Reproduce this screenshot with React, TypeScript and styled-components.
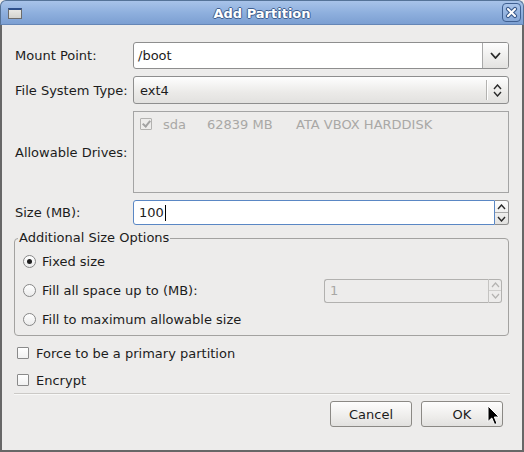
import styled, { createGlobalStyle } from "styled-components";

const GlobalStyle = createGlobalStyle`
  html, body {
    margin: 0;
    padding: 0;
    background: #edeceb;
  }
  body {
    font-family: "DejaVu Sans", "Liberation Sans", sans-serif;
    font-size: 13px;
    color: #1c1c1c;
  }
`;

const Chevron = ({ up, w = 9, h = 5, sw = 1.8, color = "#2a2a2a" }: { up?: boolean; w?: number; h?: number; sw?: number; color?: string }) => (
  <svg width={w + 2} height={h + 2} viewBox={`0 0 ${w + 2} ${h + 2}`}>
    <path
      d={up ? `M1 ${h + 1} L${w / 2 + 1} 1 L${w + 1} ${h + 1}` : `M1 1 L${w / 2 + 1} ${h + 1} L${w + 1} 1`}
      fill="none"
      stroke={color}
      strokeWidth={sw}
    />
  </svg>
);

const App = () => {
  return (
    <>
      <GlobalStyle />
      <Window>
        <TitleBar>
          <WindowIcon />
          <Title>Add Partition</Title>
          <CloseButton>
            <svg width="19" height="19" viewBox="0 0 19 19">
              <path d="M6 6 L13 13 M13 6 L6 13" stroke="#3b5b8c" strokeWidth="4.2" strokeLinecap="round" />
              <path d="M6 6 L13 13 M13 6 L6 13" stroke="#fff" strokeWidth="2" strokeLinecap="round" />
            </svg>
          </CloseButton>
        </TitleBar>
        <Body>
          <Form>
            <Label>Mount Point:</Label>
            <Combo>
              <ComboText>/boot</ComboText>
              <ComboArrow>
                <Chevron />
              </ComboArrow>
            </Combo>

            <Label>File System Type:</Label>
            <Picker>
              <PickerText>ext4</PickerText>
              <PickerSep />
              <PickerArrows>
                <Chevron up w={7} h={4} sw={1.4} />
                <Chevron w={7} h={4} sw={1.4} />
              </PickerArrows>
            </Picker>

            <Label>Allowable Drives:</Label>
            <DrivesBox>
              <DriveRow>
                <Checkbox checked disabled />
                <DriveCell width={44}>sda</DriveCell>
                <DriveCell width={89}>62839 MB</DriveCell>
                <DriveCell>ATA VBOX HARDDISK</DriveCell>
              </DriveRow>
            </DrivesBox>

            <Label>Size (MB):</Label>
            <Spin>
              <SpinEntry focused>
                100
                <Caret />
              </SpinEntry>
              <SpinButtons>
                <SpinHalf>
                  <Chevron up w={7} h={4} sw={1.4} />
                </SpinHalf>
                <SpinHalf bottom>
                  <Chevron w={7} h={4} sw={1.4} />
                </SpinHalf>
              </SpinButtons>
            </Spin>
          </Form>

          <SizeFrame>
            <Legend>Additional Size Options</Legend>
            <OptionRow>
              <Radio selected />
              Fixed size
            </OptionRow>
            <OptionRow>
              <Radio />
              Fill all space up to (MB):
              <DisabledSpin>
                <SpinEntry disabled>1</SpinEntry>
                <SpinButtons disabled>
                  <SpinHalf disabled>
                    <Chevron up w={7} h={4} sw={1.2} color="#b4b3b1" />
                  </SpinHalf>
                  <SpinHalf bottom disabled>
                    <Chevron w={7} h={4} sw={1.2} color="#b4b3b1" />
                  </SpinHalf>
                </SpinButtons>
              </DisabledSpin>
            </OptionRow>
            <OptionRow>
              <Radio />
              Fill to maximum allowable size
            </OptionRow>
          </SizeFrame>

          <CheckRow>
            <Checkbox />
            Force to be a primary partition
          </CheckRow>
          <CheckRow>
            <Checkbox />
            Encrypt
          </CheckRow>

          <Separator />

          <ButtonBar>
            <Button>Cancel</Button>
            <Button>OK</Button>
          </ButtonBar>
        </Body>
        <Pointer width="13" height="21" viewBox="0 0 13 21">
          <path d="M1 1 L1 16.5 L4.8 13 L7.6 19.5 L10 18.5 L7.3 12 L12 12 Z" fill="#000" stroke="#fff" strokeWidth="1" strokeLinejoin="round" />
        </Pointer>
      </Window>
    </>
  );
};

export default App;

const Window = styled.div`
  position: relative;
  width: 524px;
  height: 452px;
  display: flex;
  flex-direction: column;
  box-sizing: border-box;
`;

const TitleBar = styled.div`
  height: 25px;
  box-sizing: border-box;
  display: flex;
  align-items: center;
  padding: 0 2px 0 7px;
  border: 1px solid #557398;
  border-bottom-color: #6586b6;
  border-radius: 6px 6px 0 0;
  background: linear-gradient(#a8c3e9, #8fb0de 50%, #7c9fd2);
`;

const WindowIcon = styled.div`
  width: 14px;
  height: 11px;
  box-sizing: border-box;
  margin-top: 2px;
  border: 1px solid #6c6c6c;
  border-top: 2px solid #2d4f8a;
  background: linear-gradient(#e8e8e4, #d3d3ce);
`;

const Title = styled.div`
  flex: 1;
  text-align: center;
  font-weight: bold;
  font-size: 13px;
  color: #fff;
  padding-top: 1px;
  text-shadow:
    1px 0 0 #3f5f8f,
    -1px 0 0 #3f5f8f,
    0 1px 0 #3f5f8f,
    0 -1px 0 #3f5f8f;
`;

const CloseButton = styled.div`
  width: 19px;
  height: 19px;
  box-sizing: border-box;
  border: 1px solid #3f6092;
  border-radius: 4px;
  background: linear-gradient(#a9c4ea, #86a8d8);
  display: flex;
  align-items: center;
  justify-content: center;

  svg {
    margin: -1px;
  }
`;

const Body = styled.div`
  flex: 1;
  display: flex;
  flex-direction: column;
  border: 2px solid #676767;
  border-top: none;
  padding: 17px 13px 0 12px;
  background: #edeceb;
`;

const Form = styled.div`
  display: grid;
  grid-template-columns: 119px 1fr;
  grid-template-rows: 27px 28px 82px 25px;
  row-gap: 7px;
  align-items: center;
`;

const Label = styled.div`
  padding-left: 1px;
`;

const Combo = styled.div`
  align-self: stretch;
  display: flex;
  box-sizing: border-box;
  border: 1px solid #8e8e8e;
  border-radius: 3px;
  background: #fff;
  overflow: hidden;
`;

const ComboText = styled.div`
  flex: 1;
  display: flex;
  align-items: center;
  padding-left: 4px;
`;

const ComboArrow = styled.div`
  width: 25px;
  display: flex;
  align-items: center;
  justify-content: center;
  border-left: 1px solid #a9a9a9;
  background: linear-gradient(#fdfdfd, #e3e2e0);
`;

const Picker = styled.div`
  align-self: stretch;
  display: flex;
  align-items: center;
  box-sizing: border-box;
  border: 1px solid #8e8e8e;
  border-radius: 3px;
  padding-left: 6px;
  background: linear-gradient(#fefefe, #ebeae8 60%, #e2e1df);
`;

const PickerText = styled.div`
  flex: 1;
`;

const PickerSep = styled.div`
  width: 1px;
  height: 20px;
  background: #b3b2b0;
  box-shadow: 1px 0 0 #fff;
`;

const PickerArrows = styled.div`
  width: 21px;
  display: flex;
  flex-direction: column;
  align-items: center;
  gap: 1px;
`;

const DrivesBox = styled.div`
  align-self: stretch;
  box-sizing: border-box;
  border: 1px solid #a4a4a4;
  padding: 6px;
`;

const DriveRow = styled.div`
  display: flex;
  align-items: center;
  gap: 11px;
  height: 12px;
  color: #a9a8a6;
`;

const DriveCell = styled.span<{ width?: number }>`
  ${(props) => (props.width ? `width: ${props.width - 11}px;` : "")}
  white-space: nowrap;
`;

const Checkbox = styled.span<{ checked?: boolean; disabled?: boolean }>`
  position: relative;
  flex: none;
  width: 12px;
  height: 12px;
  box-sizing: border-box;
  border: 1px solid ${(props) => (props.disabled ? "#b3b2b0" : "#8a8a8a")};
  border-radius: 1px;
  background: ${(props) => (props.disabled ? "#edeceb" : "linear-gradient(#fff, #f1f1f1)")};

  ${(props) =>
    props.checked
      ? `&::after {
    content: "";
    position: absolute;
    left: 3px;
    top: 0px;
    width: 3px;
    height: 6px;
    border: solid #a3a3a3;
    border-width: 0 2px 2px 0;
    transform: rotate(40deg);
  }`
      : ""}
`;

const Spin = styled.div`
  align-self: stretch;
  display: flex;
`;

const SpinEntry = styled.div<{ focused?: boolean; disabled?: boolean }>`
  flex: 1;
  display: flex;
  align-items: center;
  padding-left: 5px;
  box-sizing: border-box;
  border: 1px solid ${(props) => (props.focused ? "#5a87c4" : "#b2b1af")};
  border-right: ${(props) => (props.focused ? "1px solid #5a87c4" : "none")};
  border-radius: 3px 0 0 3px;
  background: ${(props) => (props.disabled ? "#edeceb" : "#fff")};
  color: ${(props) => (props.disabled ? "#a8a7a5" : "#1c1c1c")};
`;

const Caret = styled.span`
  display: inline-block;
  width: 1px;
  height: 16px;
  margin-left: 1px;
  background: #000;
`;

const SpinButtons = styled.div<{ disabled?: boolean }>`
  width: 14px;
  display: flex;
  flex-direction: column;
  box-sizing: border-box;
  border: 1px solid ${(props) => (props.disabled ? "#b2b1af" : "#8e8e8e")};
  border-left: ${(props) => (props.disabled ? "1px solid #c4c3c1" : "none")};
  border-radius: 0 3px 3px 0;
  background: ${(props) => (props.disabled ? "#edeceb" : "linear-gradient(#fdfdfd, #e3e2e0)")};
`;

const SpinHalf = styled.div<{ bottom?: boolean; disabled?: boolean }>`
  flex: 1;
  display: flex;
  align-items: center;
  justify-content: center;
  ${(props) => (props.bottom ? `border-top: 1px solid ${props.disabled ? "#cfcecc" : "#a9a9a9"};` : "")}
`;

const SizeFrame = styled.fieldset`
  margin: 5px 0 0;
  padding: 1px 6px 1px 8px;
  border: 1px solid #a3a2a0;
  border-radius: 4px;
  min-width: 0;
`;

const Legend = styled.legend`
  padding: 0 1px;
  margin-left: -5px;
  line-height: 16px;
`;

const OptionRow = styled.div`
  height: 29px;
  display: flex;
  align-items: center;
  gap: 6px;
`;

const Radio = styled.span<{ selected?: boolean }>`
  position: relative;
  flex: none;
  width: 13px;
  height: 13px;
  box-sizing: border-box;
  border: 1px solid #878787;
  border-radius: 50%;
  background: linear-gradient(#ffffff, #ebebeb);

  ${(props) =>
    props.selected
      ? `&::after {
    content: "";
    position: absolute;
    left: 3px;
    top: 3px;
    width: 5px;
    height: 5px;
    border-radius: 50%;
    background: #1e1e1e;
  }`
      : ""}
`;

const DisabledSpin = styled.div`
  margin-left: auto;
  width: 178px;
  height: 24px;
  display: flex;
`;

const CheckRow = styled.div`
  height: 26px;
  display: flex;
  align-items: center;
  gap: 7px;
  padding-left: 3px;

  & + & {
    margin-top: 1px;
  }

  fieldset + & {
    margin-top: 4px;
  }
`;

const Separator = styled.div`
  height: 1px;
  margin-right: -1px;
  background: #cbc9c6;
  box-shadow: 0 1px 0 #f8f8f7;
`;

const ButtonBar = styled.div`
  display: flex;
  justify-content: flex-end;
  gap: 9px;
  margin-top: 7px;
  padding-right: 6px;
`;

const Button = styled.div`
  width: 82px;
  height: 26px;
  box-sizing: border-box;
  display: flex;
  align-items: center;
  justify-content: center;
  border: 1px solid #8b8985;
  border-radius: 3px;
  background: linear-gradient(#fdfdfd, #eeedeb 60%, #e2e1df);
`;

const Pointer = styled.svg`
  position: absolute;
  left: 487px;
  top: 405px;
`;
